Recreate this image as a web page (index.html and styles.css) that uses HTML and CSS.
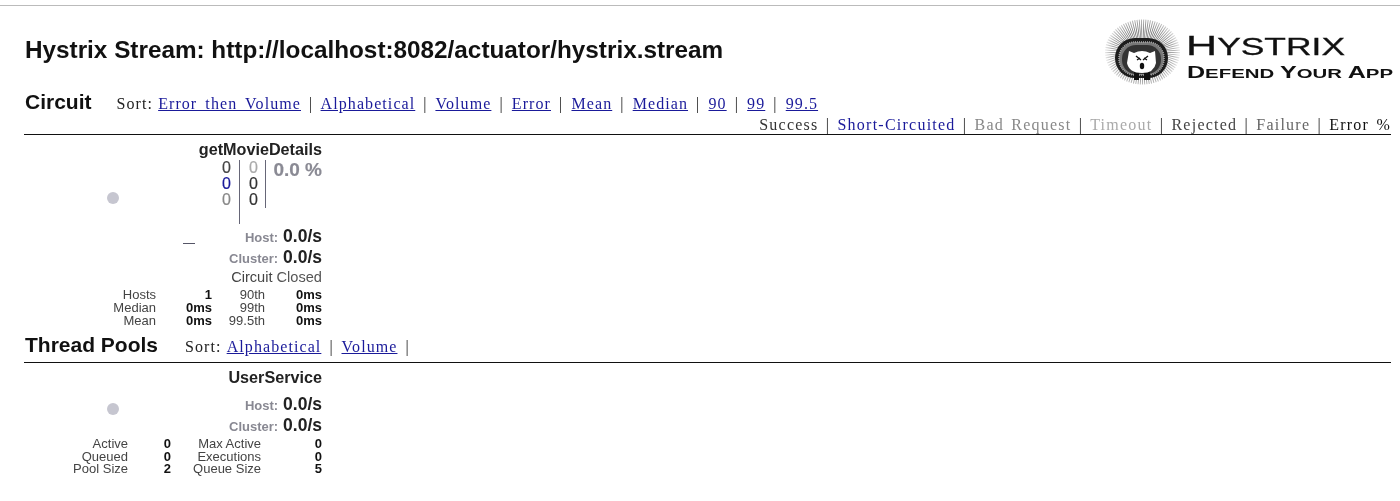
FILE: index.html
```html
<!doctype html>
<html>
   <head>
      <meta charset="utf-8">
      <title>Hystrix Monitor</title>
      <link rel="stylesheet" href="styles.css">
   </head>
   <body>
      <div class="page">
         <div class="header">
            <h2 class="stream-title">Hystrix Stream: http://localhost:8082/actuator/hystrix.stream</h2>
            <svg class="logo" width="295" height="70" viewBox="0 0 295 70">
               <defs>
                  <radialGradient id="spikes" gradientUnits="userSpaceOnUse" cx="41.5" cy="37" r="38">
                     <stop offset="0.55" stop-color="#666"/>
                     <stop offset="0.8" stop-color="#a8a8a8"/>
                     <stop offset="1" stop-color="#eee"/>
                  </radialGradient>
               </defs>
               <ellipse cx="41.5" cy="37" rx="28" ry="23" fill="none" stroke="url(#spikes)" stroke-width="19" stroke-dasharray="0.8 1"/>
               <rect x="14" y="23" width="53" height="40" rx="20" fill="#1c1c1c"/>
               <rect x="18" y="27" width="45" height="33" rx="16" fill="#777" stroke="#aaa" stroke-width="1.5" stroke-dasharray="1 1"/>
               <rect x="21" y="30" width="39" height="29" rx="14" fill="#333"/>
               <path d="M33 57 h5 v8 h-5 Z M43 57 h6 v8 h-6 Z" fill="#111"/>
               <path d="M28 36 L33 38 Q41 34 49 38 L54 36 L55 48 Q53 58 41 58 Q28 58 26 48 Z" fill="#fff"/>
               <path d="M35 41 L40 45 M47 41 L42 45 M36 45 L39 43 M46 45 L43 43" stroke="#111" stroke-width="1.3" fill="none"/>
               <ellipse cx="41" cy="51" rx="2.2" ry="3.2" fill="#111"/>
               <text class="logo-big" x="85" y="40" textLength="159" lengthAdjust="spacingAndGlyphs"><tspan>H</tspan><tspan class="logo-small">YSTRIX</tspan></text>
               <text class="logo-sub" x="86" y="63" textLength="206" lengthAdjust="spacingAndGlyphs"><tspan>D</tspan><tspan class="logo-sub-small">EFEND </tspan><tspan>Y</tspan><tspan class="logo-sub-small">OUR </tspan><tspan>A</tspan><tspan class="logo-sub-small">PP</tspan></text>
            </svg>
         </div>

         <div class="section-head circuit-head">
            <h3>Circuit</h3>
            <div class="sort">Sort: <a href="#">Error then Volume</a> | <a href="#">Alphabetical</a> | <a href="#">Volume</a> | <a href="#">Error</a> | <a href="#">Mean</a> | <a href="#">Median</a> | <a href="#">90</a> | <a href="#">99</a> | <a href="#">99.5</a></div>
         </div>
         <div class="legend">
            <span class="c-success">Success</span> | <span class="c-short">Short-Circuited</span> | <span class="c-bad">Bad Request</span> | <span class="c-timeout">Timeout</span> | <span class="c-rejected">Rejected</span> | <span class="c-failure">Failure</span> | <span class="c-error">Error %</span>
         </div>

         <div class="monitor">
            <div class="monitor-name">getMovieDetails</div>
            <div class="monitor-body">
               <div class="graph">
                  <div class="dot"></div>
                  <div class="spark"></div>
               </div>
               <div class="counters">
                  <div class="counter-col col-a">
                     <div class="c-rejected">0</div>
                     <div class="c-short">0</div>
                     <div class="c-bad">0</div>
                  </div>
                  <div class="counter-col col-b">
                     <div class="c-timeout">0</div>
                     <div>0</div>
                     <div>0</div>
                  </div>
                  <div class="rate-pct">0.0 %</div>
               </div>
            </div>
            <div class="rate"><span class="rate-label">Host:</span> 0.0/s</div>
            <div class="rate"><span class="rate-label">Cluster:</span> 0.0/s</div>
            <div class="circuit-status">Circuit <span class="closed">Closed</span></div>
            <div class="stats circuit-stats">
               <span>Hosts</span><b>1</b><span>90th</span><b>0ms</b>
               <span>Median</span><b>0ms</b><span>99th</span><b>0ms</b>
               <span>Mean</span><b>0ms</b><span>99.5th</span><b>0ms</b>
            </div>
         </div>

         <div class="section-head pool-head">
            <h3>Thread Pools</h3>
            <div class="sort">Sort: <a href="#">Alphabetical</a> | <a href="#">Volume</a> |</div>
         </div>
         <div class="rule"></div>

         <div class="monitor">
            <div class="monitor-name">UserService</div>
            <div class="pool-body">
               <div class="graph">
                  <div class="dot"></div>
               </div>
               <div class="pool-rates">
                  <div class="rate"><span class="rate-label">Host:</span> 0.0/s</div>
                  <div class="rate"><span class="rate-label">Cluster:</span> 0.0/s</div>
               </div>
            </div>
            <div class="stats pool-stats">
               <span>Active</span><b>0</b><span>Max Active</span><b>0</b>
               <span>Queued</span><b>0</b><span>Executions</span><b>0</b>
               <span>Pool Size</span><b>2</b><span>Queue Size</span><b>5</b>
            </div>
         </div>
      </div>
   </body>
</html>
```

FILE: styles.css
```css
html, body { margin: 0; padding: 0; background: #fff; }
body { font-family: "Liberation Sans", Arial, sans-serif; color: #111; height: 501px; overflow: hidden; }
.page { margin-top: 5px; border-top: 1px solid #bbb; padding: 0 9px 0 24px; will-change: opacity; }

.header { display: flex; justify-content: space-between; height: 76px; }
.stream-title { margin: 30px 0 0 1px; font-size: 24.3px; line-height: 28px; font-weight: bold; }
.logo { margin: 9px -5px 0 0; }
.logo text { font-family: "Liberation Sans", Arial, sans-serif; fill: #111; }
.logo-big { font-size: 28px; stroke: #111; stroke-width: 0.3px; }
.logo-small { font-size: 23px; }
.logo-sub { font-size: 16px; font-weight: bold; }
.logo-sub-small { font-size: 13px; }

.section-head { display: flex; align-items: baseline; }
.section-head h3 { margin: 0 0 0 1px; font-size: 21px; line-height: 24px; font-weight: bold; }
.sort, .legend { font-family: "Liberation Serif", "Times New Roman", serif; font-size: 16px; letter-spacing: 1.08px; word-spacing: 3px; color: #222; }
.sort a { color: #1a1a9a; }
.sort a:first-child { margin-left: -3px; }
.circuit-head { height: 24px; padding-top: 8px; }
.circuit-head .sort { margin-left: 25px; }
.pool-head { height: 24px; margin-top: 6px; }
.pool-head .sort { margin-left: 27px; }

.legend { text-align: right; border-bottom: 1px solid #111; height: 20px; line-height: 22px; letter-spacing: 1.24px; word-spacing: 2px; }
.rule { height: 0; border-bottom: 1px solid #111; margin-top: 5px; }
.c-success { color: #333; }
.c-short { color: #1a1a9a; }
.c-bad { color: #888; }
.c-timeout { color: #aaa; }
.c-rejected { color: #444; }
.c-failure { color: #666; }
.c-error { color: #111; }

.monitor { width: 298px; }
.monitor-name { text-align: right; font-size: 16.2px; font-weight: bold; line-height: 18px; color: #222; padding-top: 5px; }

.monitor-body { display: flex; height: 68px; }
.graph { width: 178px; display: flex; flex-direction: column; flex: none; }
.dot { width: 12px; height: 12px; border-radius: 50%; margin: 34px auto 0; flex: none; background: #d8d8e0 radial-gradient(circle, #b4b4c0 45%, transparent 55%) 0 0 / 2px 2px; }
.spark { width: 12px; height: 1px; background: #555566; margin: 39px 0 0 159px; flex: none; }

.counters { display: flex; flex: 1; font-size: 16px; line-height: 16px; padding-top: 2px; color: #333; -webkit-text-stroke: 0.2px; }
.counter-col { text-align: right; }
.col-a { width: 29px; height: 64px; padding-right: 8px; border-right: 1px solid #667; }
.col-b { width: 18px; height: 48px; padding-right: 7px; border-right: 1px solid #667; }
.rate-pct { flex: 1; text-align: right; font-size: 19px; line-height: 20px; font-weight: bold; color: #8a8a94; }

.rate { text-align: right; font-size: 17.5px; height: 21px; line-height: 21px; font-weight: bold; color: #222; }
.rate-label { font-size: 13px; color: #888892; }
.circuit-status { text-align: right; font-size: 14.6px; line-height: 19px; color: #444; }
.closed { color: #555; }

.stats { display: grid; font-size: 13px; line-height: 13px; color: #444; text-align: right; }
.stats b { color: #111; }
.circuit-stats { grid-template-columns: 132px 56px 53px 57px; padding-top: 1px; }
.pool-stats { grid-template-columns: 104px 43px 90px 61px; line-height: 12.5px; padding-top: 2px; }

.pool-body { display: flex; height: 50px; }
.pool-body .dot { margin-top: 17px; }
.pool-rates { flex: 1; padding-top: 8px; }
```
